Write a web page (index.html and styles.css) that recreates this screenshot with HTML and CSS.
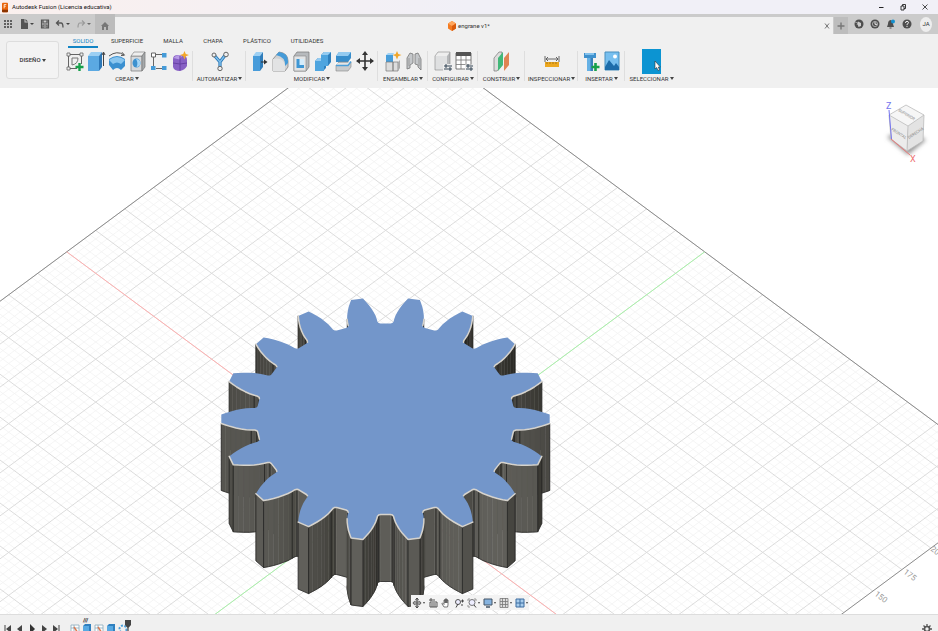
FILE: index.html
```html
<!DOCTYPE html>
<html lang="es">
<head>
<meta charset="utf-8">
<title>Autodesk Fusion (Licencia educativa)</title>
<link rel="stylesheet" href="styles.css">
</head>
<body>
<header class="titlebar">
  <svg class="logo" viewBox="0 0 7 11"><rect width="7" height="11" rx="1" fill="#e8640c"/><path d="M0 8h7v2a1 1 0 0 1-1 1H1a1 1 0 0 1-1-1z" fill="#8c3300"/><path d="M2.5 6.500v-4.500h2.500M2.500 4h2" stroke="#fff0dc" fill="none"/></svg>
  <h1 class="apptitle">Autodesk Fusion (Licencia educativa)</h1>
  <div class="winbuttons">
    <button aria-label="Minimizar"><svg viewBox="0 0 8 8"><path d="M2 4.500h4.500" stroke="#222"/></svg></button>
    <button aria-label="Restaurar"><svg viewBox="0 0 8 8"><path d="M2 3h3v4H2zM3.500 3V1.500H6.500V5.500H5" stroke="#222" fill="none" stroke-width=".9"/></svg></button>
    <button aria-label="Cerrar"><svg viewBox="0 0 8 8"><path d="M1.500 1.500l5 5M6.500 1.500l-5 5" stroke="#222" stroke-width=".8"/></svg></button>
  </div>
</header>

<div class="tabstrip">
  <div class="quick">
    <button aria-label="Panel de datos"><svg viewBox="0 0 10 10" fill="#606060"><path d="M1 1h2v2H1zM4 1h2v2H4zM7 1h2v2H7zM1 4h2v2H1zM4 4h2v2H4zM7 4h2v2H7zM1 7h2v2H1zM4 7h2v2H4zM7 7h2v2H7z"/></svg></button>
    <button class="drop" aria-label="Archivo"><svg viewBox="0 0 10 10" fill="#555"><path d="M2 0h3.500v3.500H9V10H2zM6.500 0 9 2.500H6.500z"/></svg></button>
    <button aria-label="Guardar"><svg viewBox="0 0 10 10"><path d="M1.500 1h7v8h-7zM3 1v3h4V1M3 9V6h4v3M4.500 7.500h1" stroke="#555" fill="none" stroke-width="1.200"/></svg></button>
    <button class="drop" aria-label="Deshacer"><svg viewBox="0 0 10 10"><path d="M4 1.500 1.500 4 4 6.500M1.500 4H6q2 0 2 4.500" stroke="#555" stroke-width="1.300" fill="none"/></svg></button>
    <button class="drop dim" aria-label="Rehacer"><svg viewBox="0 0 10 10"><path d="M6 1.500 8.500 4 6 6.500M8.500 4H4Q2 4 2 8.500" stroke="#888" stroke-width="1.200" fill="none"/></svg></button>
  </div>
  <button class="home" aria-label="Inicio"><svg viewBox="0 0 10 10" fill="#777"><path d="M5 1 1 5h1v4h2V6h2v3h2V5h1z"/></svg></button>
  <div class="doctab">
    <span class="docname"><svg viewBox="0 0 8 10"><path d="M4 0 8 2.500v5L4 10 0 7.500v-5z" fill="#f47b20"/><path d="M0 2.500 4 0l4 2.500L4 5z" fill="#ffa65c"/><path d="M4 5 8 2.500v5L4 10z" fill="#d95a0b"/></svg>engrane v1*</span>
    <button class="closetab" aria-label="Cerrar pestaña"><svg viewBox="0 0 8 8"><path d="M2 1.500 6 6.500M6 1.500 2 6.500" stroke="#555" stroke-width=".8"/></svg></button>
  </div>
  <div class="account">
    <button class="plus" aria-label="Nueva pestaña"><svg viewBox="0 0 10 10"><path d="M5 1.500v7M1.500 5h7" stroke="#777" stroke-width="1.400"/></svg></button>
    <button aria-label="Extensiones"><svg viewBox="0 0 10 10"><circle cx="5" cy="5" r="4.500" fill="#4e4e4e"/><path d="M4 2.500 7 4v3L4.500 8 3.500 5z" fill="#ccc"/><path d="M1 3l3 1-1 2" stroke="#ccc" fill="none" stroke-width=".6"/></svg></button>
    <button aria-label="Estado de trabajos"><svg viewBox="0 0 10 10"><circle cx="5" cy="5" r="4.500" fill="#4e4e4e"/><circle cx="5" cy="5" r="2.600" fill="none" stroke="#ccc" stroke-width=".7"/><path d="M5 3v2.300h2" stroke="#eee" fill="none"/></svg></button>
    <button aria-label="Notificaciones"><svg viewBox="0 0 10 10"><path d="M4.500 1Q2 1.500 2 5L1 8h7L7 5Q7 1.500 4.500 1zM3.500 8.500h2v1h-2z" fill="#4e4e4e"/><circle cx="7" cy="2.500" r="2" fill="#1491d0"/></svg></button>
    <button aria-label="Ayuda"><svg viewBox="0 0 10 10"><circle cx="5" cy="5" r="4.500" fill="#4e4e4e"/><path d="M3.500 4q0-1.700 1.500-1.700T6.500 3.800Q6.500 4.500 5 5.300v.9M5 7v1" stroke="#eee" fill="none"/></svg></button>
    <button class="avatar">JA</button>
  </div>
</div>

<section class="ribbon">
  <button class="workspace drop">DISEÑO</button>
  <div class="ribbonmain">
    <nav class="tabs">
      <a class="on" href="#solido">SOLIDO</a><a class="t2" href="#superficie">SUPERFICIE</a><a class="t3" href="#malla">MALLA</a><a class="t4" href="#chapa">CHAPA</a><a class="t5" href="#plastico">PLÁSTICO</a><a class="t2" href="#utilidades">UTILIDADES</a>
    </nav>
    <div class="groups">
      <div class="group g6">
        <div class="tools">
          <button aria-label="Crear boceto"><svg viewBox="0 0 20 22"><path d="M3 4.500h14M3.500 3v16M16.500 3v11M2 18.500h10" stroke="#555" fill="none" stroke-width=".9"/><path d="M2 3h3v3H2zM15 3h3v3h-3zM2 17h3v3H2z" fill="#eee" stroke="#666" stroke-width=".8"/><path d="M7 15V8h6q0 6-6 7z" stroke="#777" fill="none"/><path d="M14.500 13v8M10.500 17h8" stroke="#17a04a" stroke-width="2.400"/></svg></button>
          <button aria-label="Extruir"><svg viewBox="0 0 20 22"><path d="M2 6h11v15H2z" fill="#5ba9e2"/><path d="M2 6l3-4h11l-3 4z" fill="#9bcff3"/><path d="M13 6l3-4v15l-3 4z" fill="#2d78b7"/><path d="M17.500 16V3M16 5l1.500-3L19 5" stroke="#444" fill="none"/></svg></button>
          <button aria-label="Revolución"><svg viewBox="0 0 20 22"><path d="M2 9q8-6 16 0v7l-4 4q-4-4-8 0l-4-5z" fill="#3b90d0"/><path d="M2 10q8-6 16 0l-4 4q-4-3-8 0z" fill="#8ac6ef"/><path d="M2 6q8-6 15-1M15 2.200l2.500 3-3.500.3" stroke="#555" fill="none"/></svg></button>
          <button aria-label="Agujero"><svg viewBox="0 0 20 22"><path d="M3 6h11v15H3z" fill="#d7d9db" stroke="#777" stroke-width=".7"/><path d="M3 6l3-4h11l-3 4z" fill="#eee" stroke="#888" stroke-width=".7"/><path d="M14 6l3-4v15l-3 4z" fill="#a6a9ab" stroke="#777" stroke-width=".7"/><ellipse cx="8.500" cy="13" rx="4" ry="4.500" fill="#3c91cf"/><path d="M8 9q4 0 4.500 4-.5 4-4 4 2-4-.5-8z" fill="#a4d5f6"/></svg></button>
          <button aria-label="Patrón"><svg viewBox="0 0 20 22"><path d="M7 4.500h7M4.500 7v9M7 18.500h7" stroke="#666"/><path d="M2.500 3h4v4h-4z" fill="#fff" stroke="#666"/><path d="M13 3h4.500v4.500H13zM2 16h4.500v4H2zM13 16h4.500v4H13z" fill="#459bd8"/></svg></button>
          <button aria-label="Crear forma"><svg viewBox="0 0 20 22"><path d="M3 9q0-4 5-4h5q4 1 4 5v6q-2 4-7 5-6 0-7-4z" fill="#8861c5"/><path d="M3.500 8q3-4 9-2.500l-3 4z" fill="#b79be6"/><path d="M10 6v14.500M3 13q7 2 14 0" stroke="#6741a4" fill="none"/><path d="m14.500 1 1.300 3 3.200 1-3.200 1.300-1.300 3.200-1.300-3.200L10 5l3.200-1z" fill="#f2a72a"/></svg></button>
        </div><button class="glabel drop">CREAR</button>
      </div>
      <div class="group g1">
        <div class="tools"><button aria-label="Automatizar"><svg viewBox="0 0 20 22"><path d="M4 5 10 12 16 4M10 12v6" stroke="#2878b8" stroke-width="3.200" fill="none"/><path d="M4 5 10 12 16 4M10 12v6" stroke="#82c1ec" stroke-width="1.400" fill="none"/><g fill="#eee" stroke="#666"><circle cx="4" cy="5" r="2"/><circle cx="16" cy="4.500" r="2.300"/><circle cx="10" cy="18.500" r="2.200"/></g></svg></button></div>
        <button class="glabel drop">AUTOMATIZAR</button>
      </div>
      <div class="group g6">
        <div class="tools">
          <button aria-label="Pulsar/tirar"><svg viewBox="0 0 20 22"><path d="M3 6h7v15H3z" fill="#489cda"/><path d="M3 6l3-4h7l-3 4z" fill="#9ed0f3"/><path d="M10 6l3-4v15l-3 4z" fill="#2f7dbb"/><path d="M11 12h4" stroke="#333"/><path d="m14 9.500 3.500 2.500L14 14.500z" fill="#333"/></svg></button>
          <button aria-label="Empalme"><svg viewBox="0 0 20 22"><path d="M2 9l6-7q9 1 9 9v6l-3 4H2z" fill="#d0d2d4" stroke="#777" stroke-width=".7"/><path d="M8 2q9 1 9 9v2l-3 3q1-9-9-11z" fill="#459bd8"/><path d="M2 9q10-2 12 6v6H2z" fill="#e2e3e4"/></svg></button>
          <button aria-label="Vaciado"><svg viewBox="0 0 20 22"><path d="M2 6l3-4h12v15l-3 4H2z" fill="#b7babd" stroke="#777" stroke-width=".7"/><path d="M2 6h12v15H2z" fill="#e3e4e5" stroke="#888" stroke-width=".6"/><path d="M4.500 9H12v9H4.500z" fill="#3f97d4"/><path d="M7.500 9H12v6H7.500z" fill="#d4ecfb"/></svg></button>
          <button aria-label="Combinar"><svg viewBox="0 0 20 22"><path d="M2 11l3-3h3V5l3-3h7v10l-3 4h-2v2l-3 3H2z" fill="#2f80bd"/><path d="M2 11h6V5h7v11h-4v5H2z" fill="#4fa5df"/><path d="M8 5l3-3h7l-3 3zM2 11l3-3h3v3z" fill="#94cbf1"/></svg></button>
          <button aria-label="Dividir"><svg viewBox="0 0 20 22"><path d="M2 6l3-4h12v6l-3 4H2z" fill="#378dcb"/><path d="M2 6l3-4h12l-3 4z" fill="#93caf0"/><path d="M2 15l3-3h12v5l-3 4H2z" fill="#c8cacc" stroke="#888" stroke-width=".6"/><path d="M1 14h13l4-5" fill="none" stroke="#fff" stroke-width="1.200"/><path d="M2 15.500h12l3-4" fill="none" stroke="#4b9fd9" stroke-width="1.400"/></svg></button>
          <button aria-label="Desplazar"><svg viewBox="0 0 20 22"><path d="M10 3v16M2 11h16" stroke="#333" stroke-width="1.600"/><path d="m10 1 3 4H7zM10 21l3-4H7zM1 11l4-3v6zM19 11l-4-3v6z" fill="#333"/></svg></button>
        </div><button class="glabel drop">MODIFICAR</button>
      </div>
      <div class="group g2">
        <div class="tools">
          <button aria-label="Nuevo componente"><svg viewBox="0 0 20 22"><path d="M3 5h7v7H3z" fill="#489edb"/><path d="M3 5l2-2h6l-1 2z" fill="#a2d3f5"/><path d="M3 12h7v9H3zM10 12h5v9h-5z" fill="#ddd" stroke="#777" stroke-width=".7"/><path d="m15 12 2-2v8l-2 3z" fill="#aaa"/><path d="m14 1 1.300 3 3.200 1-3.200 1.300-1.300 3.200-1.300-3.200L9.500 5l3.200-1z" fill="#f2a72a"/></svg></button>
          <button aria-label="Unión"><svg viewBox="0 0 20 22"><path d="M3 19V8l3-5 3 1v9l-3 2v3zM11 14V4l3-1 3 6v11l-3-3v-2z" fill="#c4c7ca" stroke="#777" stroke-width=".8"/><path d="M5 8v8M15 8v8" stroke="#999"/></svg></button>
        </div><button class="glabel drop">ENSAMBLAR</button>
      </div>
      <div class="group g2">
        <div class="tools">
          <button aria-label="Configurar modelo"><svg viewBox="0 0 20 22"><path d="M2 6h12v14H2z" fill="#dfe0e1"/><path d="M2 6l3-4h12l-3 4z" fill="#eee"/><path d="M14 6l3-4v14l-3 4z" fill="#b5b7b9"/><path d="M2 6l3-4h12v14l-3 4H2z" stroke="#888" stroke-width=".6" fill="none"/><path d="M10 16h9M10 19h9" stroke="#eee" stroke-width="4"/><path d="M11 16h8M11 19h8M13 14v4M17 17v4" stroke="#345"/></svg></button>
          <button aria-label="Tabla de configuraciones"><svg viewBox="0 0 20 22"><path d="M2 3h15v16H2z" fill="#fff" stroke="#555" stroke-width=".8"/><path d="M2 2h15v4H2z" fill="#555"/><path d="M2 10h15M2 14.500h15M7 6v13M12 6v13" stroke="#777" stroke-width=".8"/><path d="M11 17.500h9" stroke="#eee" stroke-width="6"/><path d="M12 16h7M12 19h7M14 14v4M17 17v4" stroke="#345"/></svg></button>
        </div><button class="glabel drop">CONFIGURAR</button>
      </div>
      <div class="group gs">
        <div class="tools"><button aria-label="Plano de desfase"><svg viewBox="0 0 20 22"><path d="M2 8l5-6h3v13l-5 6H2z" fill="#ddd" stroke="#777" stroke-width=".7"/><path d="m6 8 5-6v13l-5 6z" fill="#43b879"/><path d="m12 8 5-6v13l-5 6z" fill="#df8453"/></svg></button></div>
        <button class="glabel drop">CONSTRUIR</button>
      </div>
      <div class="group g1">
        <div class="tools"><button aria-label="Medir"><svg viewBox="0 0 20 22"><path d="M3 6v6M17 6v6M4 9h12M6 7 4 9l2 2M14 7l2 2-2 2" stroke="#555" fill="none" stroke-width=".9"/><path d="M3 12h14v5H3z" fill="#eda81f"/><path d="M5 12v2M8 12v2M11 12v2M14 12v2" stroke="#8f6410" stroke-width=".7"/></svg></button></div>
        <button class="glabel drop">INSPECCIONAR</button>
      </div>
      <div class="group gs">
        <div class="tools">
          <button aria-label="Insertar derivar"><svg viewBox="0 0 20 22"><path d="M3 3h12v5H3z" fill="#3f91cd"/><path d="M6 8h6v13H6z" fill="#66b1e5"/><path d="M9.500 8H12v13H9.500z" fill="#377fb9"/><path d="M4 3h9v2H4z" fill="#83c1ec"/><path d="M14.500 13v8M10.500 17h8" stroke="#17a04a" stroke-width="2.600"/></svg></button>
          <button aria-label="Lienzo"><svg viewBox="0 0 20 22"><path d="M3 2h14v18H3z" fill="#77bfef" stroke="#488fbe"/><circle cx="13" cy="6.500" r="2" fill="#fff"/><path d="m3 17 4-7 5 6 2-3 3 4v3H3z" fill="#1c6caa"/></svg></button>
        </div><button class="glabel drop">INSERTAR</button>
      </div>
      <div class="group g1 last">
        <div class="tools"><button class="selected" aria-label="Seleccionar"><svg viewBox="0 0 20 22"><path d="M13 10v8l1.700-1.500 1.300 3 1.500-.7-1.200-2.800h2z" fill="#fff" stroke="#333" stroke-width=".6"/></svg></button></div>
        <button class="glabel drop">SELECCIONAR</button>
      </div>
    </div>
  </div>
</section>

<main class="viewport">
  <svg class="scene" viewBox="0 88 938 526" preserveAspectRatio="xMidYMid slice" role="img" aria-label="engrane">
    <g id="grid"></g>
    <g class="axislabel"><text transform="translate(874 595) rotate(37)">150</text><text transform="translate(903 573) rotate(37)">175</text><text transform="translate(930 550) rotate(37)">20</text></g>
    <g id="gear"></g>
  </svg>
  <svg class="viewcube" viewBox="0 0 54 70" role="img" aria-label="Cubo de vistas">
    <defs><filter id="soft"><feGaussianBlur stdDeviation="2"/></filter></defs>
    <path d="M7 40 26 30l20 13-18 15z" fill="#999" filter="url(#soft)"/>
    <path d="M9 18 26 8l18 10-16 11z" fill="#f6f6f6"/><path d="M9 18 28 29l-1 25L11 42z" fill="#ececec"/><path d="M28 29 44 18l-1 26-16 10z" fill="#e3e3e3"/>
    <path d="M9 18 26 8l18 10-1 26-16 10-16-12zM9 18l19 11 16-11M28 29l-1 25" fill="none" stroke="#bbb" stroke-width=".8"/>
    <path d="M9 13l2.500 29" stroke="#7474ee"/><path d="m11 42 19 16" stroke="#e87878"/>
    <g class="cubeface"><text transform="translate(18 14) rotate(31)">SUPERIOR</text><text transform="translate(11 33) rotate(33)">FRONTAL</text><text transform="translate(29 42) rotate(-33)">DERECHA</text></g>
    <text x="6" y="12" class="axis" fill="#7474ee">Z</text><text x="30" y="65" class="axis" fill="#ee7070">X</text>
  </svg>
  <div class="navbar">
    <button class="drop" aria-label="Órbita"><svg viewBox="0 0 10 10"><path d="M5 0v10M1 5h8" stroke="#444"/><ellipse cx="5" cy="5" rx="4" ry="2" fill="none" stroke="#555" stroke-width=".8"/><path d="M3.500 2 5 0l1.500 2M3.500 8 5 10l1.500-2" fill="none" stroke="#444"/></svg></button>
    <button aria-label="Mirar a"><svg viewBox="0 0 10 10"><path d="M2 4h7v5H2zM1 2h6M3 6h5M3 8h5M3 0v3" stroke="#555" fill="none"/></svg></button>
    <button aria-label="Encuadre"><svg viewBox="0 0 10 10"><path d="M3 9 .8 5.500 1.500 5 3 6.500V2h1v3V1h1v4-4h1v4-3h1v5L6.500 9z" fill="#fff" stroke="#444" stroke-width=".7"/></svg></button>
    <button aria-label="Zoom"><svg viewBox="0 0 10 10"><circle cx="4" cy="4" r="2.500" fill="#eef" stroke="#555"/><path d="M4 6 2 9.500M7 3h3M8.500 1.500v3M7 7h2" stroke="#444"/></svg></button>
    <button class="drop" aria-label="Ajustar"><svg viewBox="0 0 10 10"><path d="M1 3V1h2M7 1h2v2M1 7v2h2" stroke="#999" fill="none"/><circle cx="5" cy="4.500" r="3" fill="#eef" stroke="#555" stroke-width=".8"/><path d="M7 7l2 2.500" stroke="#444"/></svg></button>
    <button class="drop" aria-label="Visualización"><svg viewBox="0 0 10 10"><path d="M1 1h8v6H1z" fill="#86b3df" stroke="#456"/><path d="M3 9h4" stroke="#456" stroke-width="1.500"/></svg></button>
    <button class="drop" aria-label="Rejilla"><svg viewBox="0 0 10 10"><path d="M1 .5h8v9H1zM1 3.500h8M1 6.500h8M3.500 0v9M6.500 0v9" fill="#ddd" stroke="#777" stroke-width=".8"/></svg></button>
    <button class="drop" aria-label="Ventanas gráficas"><svg viewBox="0 0 10 10"><path d="M1 1h8v8H1zM5 1v8M1 5h8" fill="#a7ccec" stroke="#3d6da0"/></svg></button>
  </div>
</main>

<footer class="timeline">
  <div class="playback">
    <button aria-label="Inicio"><svg viewBox="0 0 10 10"><path d="M2 1v8" stroke="#444"/><path d="M8 1v8L3 5z" fill="#444"/></svg></button>
    <button aria-label="Anterior"><svg viewBox="0 0 10 10"><path d="M7 1v8L2 5z" fill="#444"/></svg></button>
    <button aria-label="Reproducir"><svg viewBox="0 0 10 10"><path d="M3 0v10l5-5z" fill="#333"/></svg></button>
    <button aria-label="Siguiente"><svg viewBox="0 0 10 10"><path d="M3 1v8l5-4z" fill="#444"/></svg></button>
    <button aria-label="Final"><svg viewBox="0 0 10 10"><path d="M8 1v8" stroke="#444"/><path d="M2 1v8l5-4z" fill="#444"/></svg></button>
  </div>
  <div class="features">
    <button aria-label="Boceto 1"><svg viewBox="0 0 10 10"><path d="M1 1h8v8H1zM1 4h8M4 1v8" fill="#fff" stroke="#8ab" stroke-width=".8"/><path d="M4 3l4 6" stroke="#d97a52" stroke-width="1.500"/></svg></button>
    <button class="current" aria-label="Extrusión 1"><svg viewBox="0 0 10 10"><path d="M1 2 3 0h6v8l-2 2H1z" fill="#2f80bf"/><path d="M1 2h6v8H1z" fill="#58a9e2"/></svg></button>
    <button aria-label="Boceto 2"><svg viewBox="0 0 10 10"><path d="M1 1h8v8H1zM1 4h8M4 1v8" fill="#fff" stroke="#8ab" stroke-width=".8"/><path d="M4 3l4 6" stroke="#d97a52" stroke-width="1.500"/></svg></button>
    <button aria-label="Extrusión 2"><svg viewBox="0 0 10 10"><path d="M1 2 3 0h6v8l-2 2H1z" fill="#2f80bf"/><path d="M1 2h6v8H1z" fill="#58a9e2"/></svg></button>
    <button class="marked" aria-label="Patrón circular"><svg viewBox="0 0 10 10"><circle cx="5" cy="5" r="3.500" fill="none" stroke="#4d9fd8" stroke-width="2" stroke-dasharray="2 1.500"/></svg></button>
  </div>
  <button class="settings" aria-label="Configuración"><svg viewBox="0 0 10 10"><circle cx="5" cy="5" r="2.500" fill="none" stroke="#555" stroke-width="1.600"/><path d="M5 0v2M5 8v2M0 5h2M8 5h2M1.500 1.500l1.500 1.500M7 7l1.500 1.500M8.500 1.500 7 3M3 7 1.500 8.500" stroke="#555" stroke-width="1.300"/></svg></button>
</footer>
<script src="scene.js"></script>
</body>
</html>
```
FILE: scene.js
```js
// Isometric grid and extruded 18-tooth gear.
const NS = 'http://www.w3.org/2000/svg';
const draw = (parent, d, attrs) => {
  const p = document.createElementNS(NS, 'path');
  p.setAttribute('d', d);
  for (const k in attrs) p.setAttribute(k, attrs[k]);
  parent.appendChild(p);
};
const OX = 385.7, OY = 488, UX = 29, UY = 21.47;
const at = (i, j) => (OX + (i + j) * UX).toFixed(1) + ' ' + (OY + (i - j) * UY).toFixed(1);
const line = (a, b, c, d) => 'M' + at(a, b) + 'L' + at(c, d);
const grid = document.getElementById('grid');
const I0 = -11, I1 = 10.8, J0 = -16, J1 = 11;
let minor = '', major = '';
for (let n = -80; n <= 55; n++) {
  const v = n / 5;
  let s = '';
  if (v >= I0 && v <= I1) s += line(v, J0, v, J1);
  if (v >= J0 && v <= J1) s += line(I0, v, I1, v);
  if (n % 5) minor += s; else major += s;
}
draw(grid, minor, { class: 'line minor' });
draw(grid, major, { class: 'line major' });
draw(grid, line(I0, J0, I0, J1) + line(I0, J1, I1, J1) + line(I1, J1, I1, J0), { class: 'line edge' });
draw(grid, line(I0, 0, I1, 0), { class: 'line axis-x' });
draw(grid, line(0, J0, 0, J1), { class: 'line axis-y' });

const gear = document.getElementById('gear');
const CX = 385.5, CY = 419, TILT = 0.7407, DEPTH = 67;
// Tooth flank as radius and half angle in degrees, from root to tip.
const flank = [[129, 7.8], [129.6, 7], [131.5, 6.5], [135, 6.3], [140, 5.9], [145, 5.3], [150, 4.6], [155, 3.8], [160, 2.9], [164.3, 2.1]];
const half = flank.map(([r, a], k) => ({ r, a: -a, crease: k === 1 || k === 3 || k === 9 }));
const tooth = half.concat([...half].reverse().map(p => ({ ...p, a: -p.a })));
const pts = [];
for (let t = 0; t < 18; t++) {
  for (const p of tooth) {
    const a = (10 + t * 20 + p.a) * Math.PI / 180;
    pts.push({ x: CX + p.r * Math.sin(a), y: CY - p.r * Math.cos(a) * TILT, crease: p.crease });
  }
}
const f = v => v.toFixed(1);
const walls = [];
pts.forEach((p, k) => {
  const q = pts[(k + 1) % pts.length];
  const dx = q.x - p.x, dy = (q.y - p.y) / TILT;
  const len = Math.hypot(dx, dy), nx = dy / len, ny = -dx / len;
  if (ny > 0) walls.push({ p, q, nx, ny, y: (p.y + q.y) / 2 });
});
walls.sort((a, b) => a.y - b.y);
let rim = '';
for (const w of walls) {
  const low = Math.max(0, Math.min(16, (w.y - 390) / 6));
  const g = Math.round(46 + low + 46 * Math.max(0, w.ny * 0.8 - w.nx * 0.3 - 0.1));
  const c = `rgb(${g},${g - 1},${g - 6})`;
  draw(gear, `M${f(w.p.x)} ${f(w.p.y)}L${f(w.q.x)} ${f(w.q.y)}v${DEPTH}L${f(w.p.x)} ${f(w.p.y + DEPTH)}z`, { fill: c, stroke: c, 'stroke-width': 0.5 });
  let e = `M${f(w.p.x)} ${f(w.p.y + DEPTH)}L${f(w.q.x)} ${f(w.q.y + DEPTH)}`;
  for (const c2 of [w.p, w.q]) if (c2.crease) e += `M${f(c2.x)} ${f(c2.y)}v${DEPTH}`;
  draw(gear, e, { class: 'line crease' });
  rim += `M${f(w.p.x)} ${f(w.p.y)}L${f(w.q.x)} ${f(w.q.y)}`;
}
draw(gear, 'M' + pts.map(p => f(p.x) + ' ' + f(p.y)).join('L') + 'z', { class: 'face' });
draw(gear, rim, { class: 'line rim' });
```
FILE: styles.css
```css
* { box-sizing: border-box; }
body {
  margin: 0;
  height: 100vh;
  overflow: hidden;
  display: flex;
  flex-direction: column;
  background: #fff;
  color: #333;
  font: 6px/8px Roboto, "Liberation Sans", sans-serif;
}
button { display: flex; align-items: center; justify-content: center; border: 0; padding: 0; margin: 0; background: none; color: inherit; font: inherit; }
svg { display: block; flex: none; }
a { color: inherit; text-decoration: none; }
.drop::after { content: ""; border: 2px solid transparent; border-top: 3px solid #444; border-bottom: 0; margin-left: 1px; flex: none; }

.titlebar { display: flex; align-items: center; height: 14px; flex: none; padding: 0 9px 0 2px; background: linear-gradient(90deg, #faf0ee, #f1f0f7 50%); }
.logo { width: 6px; height: 11px; }
.apptitle { flex: 1; margin: 0 0 0 4px; font-size: 6px; font-weight: 400; color: #111; }
.winbuttons { display: flex; gap: 14px; }
.winbuttons svg { width: 8px; height: 8px; }

.tabstrip { display: flex; height: 20px; flex: none; background: #cbcbcb; }
.tabstrip svg { width: 10px; height: 10px; }
.quick { display: flex; align-items: center; justify-content: space-between; width: 95px; padding: 0 4px 0 3px; }
.quick .drop::after { margin-left: 1px; border-top-width: 2px; }
.dim { opacity: .7; }
.home { width: 20px; padding-top: 4px; background: #bcbcbc; }
.doctab { flex: 1; display: flex; align-items: center; margin-top: 3px; padding-right: 2px; background: #f0f0f0; }
.docname { flex: 1; display: flex; align-items: center; justify-content: center; gap: 2px; }
.docname svg { width: 8px; }
.closetab svg { width: 8px; height: 8px; }
.account { display: flex; align-items: center; gap: 6px; width: 105px; padding-left: 1px; }
.plus { width: 14px; height: 17px; margin: 3px 0 0; background: #bdbdbd; }
.avatar { width: 12px; height: 15px; margin-left: 2px; border-radius: 50%; background: #eee; }

.ribbon { display: flex; height: 54px; flex: none; padding-left: 6px; background: #f0f0f0; }
.workspace { width: 53px; height: 38px; margin-top: 7px; border: 1px solid #ddd; border-radius: 3px; background: #f3f3f3; font-weight: 500; }
.ribbonmain { flex: 1; padding-left: 2px; }
.tabs { display: flex; height: 13px; padding: 3px 0 0 7px; }
.tabs a { height: 11px; text-align: center; }
.tabs .on { width: 30px; color: #1385c5; border-bottom: 2px solid #1385c5; }
.tabs .t2 { width: 58px; }
.tabs .t3 { width: 34px; }
.tabs .t4 { width: 46px; }
.tabs .t5 { width: 42px; }
.groups { display: flex; height: 40px; }
.group { display: flex; flex-direction: column; flex: none; position: relative; }
.group:not(.last)::after { content: ""; position: absolute; right: 0; top: 4px; bottom: 6px; width: 1px; background: #dedede; }
.g6 { width: 132px; }
.g2 { width: 50px; }
.g1 { width: 53px; }
.gs { width: 47px; }
.tools { display: flex; justify-content: center; height: 27px; }
.tools button { width: 21px; }
.tools svg { width: 20px; height: 22px; }
.tools .selected { width: 19px; height: 25px; margin-top: 2px; background: #0c94d2; }
.glabel { height: 9px; align-self: center; white-space: nowrap; }

.viewport { flex: 1; min-height: 0; position: relative; overflow: hidden; }
.scene { width: 100%; height: 100%; }
.line { fill: none; }
.minor { stroke: #f3f3f3; stroke-width: .8; }
.major { stroke: #dcdcdc; }
.edge { stroke: #8c8c8c; }
.axis-x { stroke: #ffb0b0; }
.axis-y { stroke: #a9f3a9; }
.axislabel { font-size: 8px; fill: #999; }
.crease { stroke: #20201e; stroke-width: .7; }
.face { fill: #7396ca; }
.rim { stroke: #d6d3cd; stroke-width: 1.5; stroke-linecap: round; }
.viewcube { position: absolute; top: 9px; right: 4px; width: 54px; height: 70px; }
.cubeface { font-size: 4px; fill: #888; }
.axis { font-size: 9px; }
.navbar { position: absolute; left: 411px; bottom: 4px; display: flex; align-items: center; gap: 3px; height: 15px; padding: 0 1px; background: #f3f3f3; }
.navbar svg { width: 10px; height: 10px; }
.navbar .drop::after { border-width: 2px 1px 0; margin-left: 1px; }

.timeline { display: flex; height: 17px; flex: none; padding: 9px 6px 0 3px; overflow: hidden; border-top: 1px solid #ddd; background: #f0f0f0; }
.timeline svg { width: 10px; height: 10px; }
.timeline button { height: 10px; }
.playback { display: flex; gap: 2px; }
.features { display: flex; gap: 2px; margin-left: 9px; }
.features button { position: relative; }
.current::before { content: "///"; position: absolute; left: 1px; top: -8px; font-weight: 700; color: #222; }
.marked::after { content: ""; position: absolute; left: 7px; top: -4px; width: 6px; height: 14px; background: #444; clip-path: polygon(0 0, 100% 0, 100% 35%, 60% 55%, 60% 100%, 40% 100%, 40% 55%, 0 35%); }
.settings { margin-left: auto; }
```
